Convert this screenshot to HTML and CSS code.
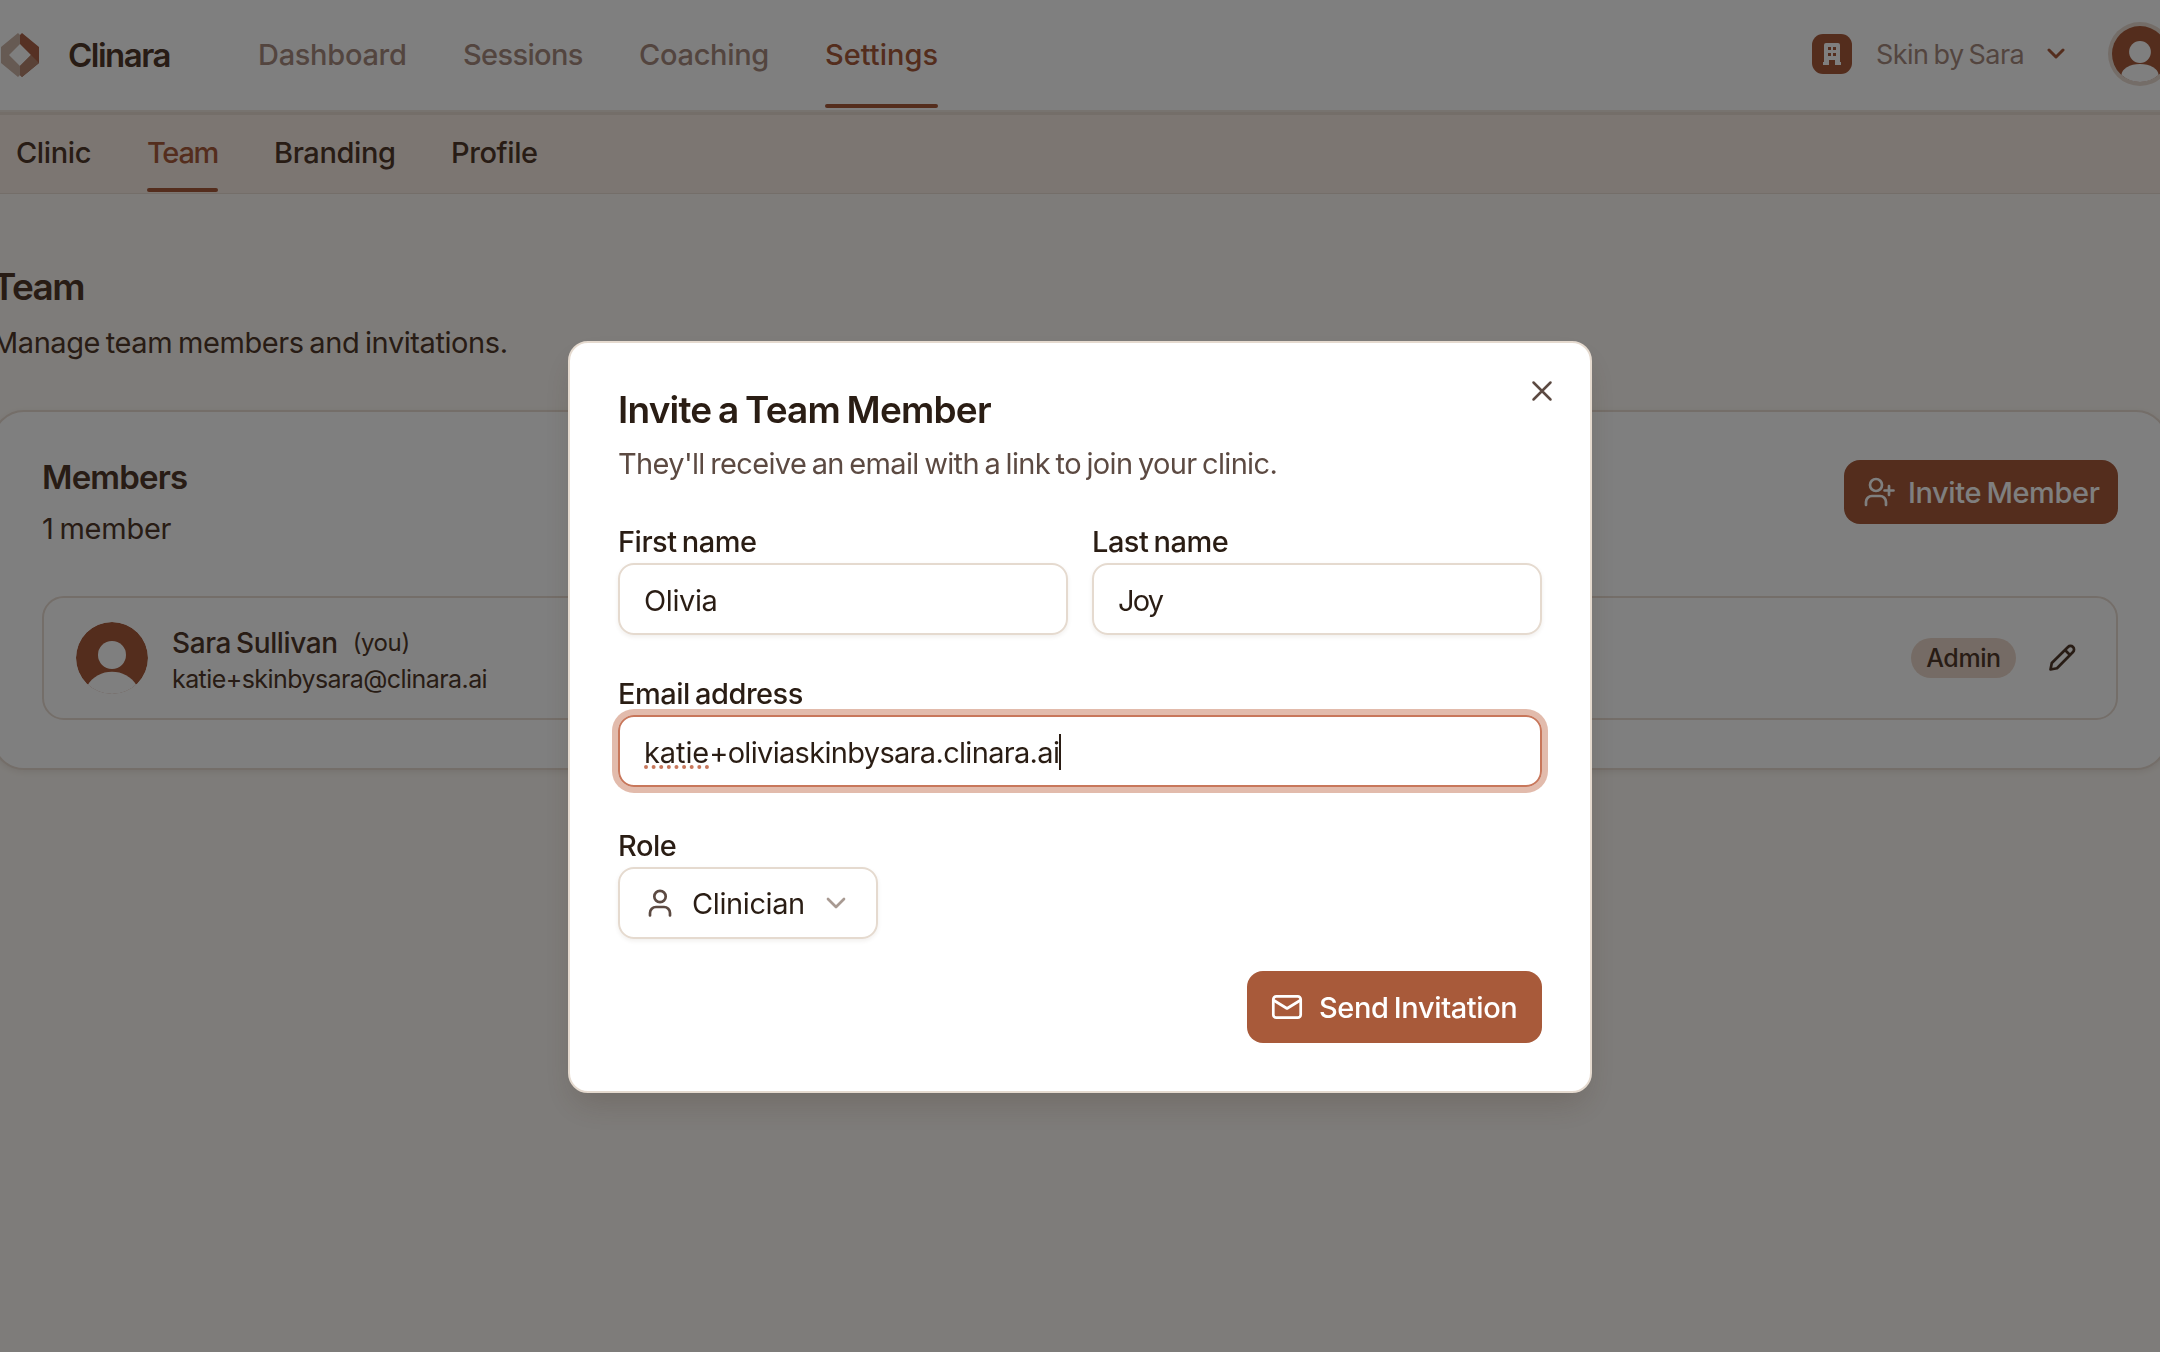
FILE: index.html
```html
<!DOCTYPE html>
<html lang="en">
<head>
    <meta charset="UTF-8">
    <meta name="viewport" content="width=device-width, initial-scale=1.0">
    <title>Team - Clinara</title>
    <link rel="stylesheet" href="styles.css">
</head>
<body>
    <header class="topbar">
        <svg class="logo" viewBox="0 0 38 44">
            <path fill="#cdb4a6" d="M17 0 0 14v16l17 14 2-2V33L8 22l11-11V2z"/>
            <path fill="#ac6348" d="M21 0 38 14v16L21 44l-2-2v-9l11-11-11-11V2z"/>
            <path fill="#b4846f" d="M19 33l11-11 8 8-17 14-2-2z"/>
        </svg>
        <span class="brand">Clinara</span>
        <nav class="main-nav">
            <a class="nav-dashboard">Dashboard</a>
            <a class="nav-sessions">Sessions</a>
            <a class="nav-coaching">Coaching</a>
            <a class="nav-settings active">Settings</a>
        </nav>
        <div class="account">
            <span class="clinic-icon">
                <svg width="20" height="24" viewBox="0 0 20 24">
                    <path fill="#fff" fill-rule="evenodd" d="M4 1h12a2 2 0 0 1 2 2v17h1v3h-6v-5H7v5H1v-3h1V3a2 2 0 0 1 2-2zM6 5v3h3V5zM11 5v3h3V5zM6 11v3h3v-3zM11 11v3h3v-3z"/>
                </svg>
            </span>
            <span class="clinic-name">Skin by Sara</span>
            <svg class="account-chevron" width="18" height="12" viewBox="0 0 18 12"><path d="M2 2l7 7 7-7"/></svg>
            <svg class="account-avatar" width="64" height="64" viewBox="0 0 64 64">
                <circle cx="32" cy="32" r="32" fill="#e9dbd1"/>
                <circle cx="32" cy="32" r="28" fill="#a85a3a"/>
                <circle cx="32" cy="30" r="10.9" fill="#fff"/>
                <path fill="#fff" d="M13.500 53a18.500 11 0 0 1 37 0A28 28 0 0 1 13.500 53z"/>
            </svg>
        </div>
    </header>

    <nav class="sub-nav">
        <a class="sub-clinic">Clinic</a>
        <a class="sub-team active">Team</a>
        <a class="sub-branding">Branding</a>
        <a>Profile</a>
    </nav>

    <main class="page">
        <h1 class="page-title">Team</h1>
        <p class="page-subtitle">Manage team members and invitations.</p>

        <section class="card">
            <div class="card-header">
                <div>
                    <h2>Members</h2>
                    <p class="count">1 member</p>
                </div>
                <button class="btn btn-invite">
                    <svg width="32" height="30" viewBox="0 0 32 30"><circle cx="12" cy="8" r="6"/><path d="M2 28v-3a6 6 0 0 1 6-6h8a6 6 0 0 1 6 6v3M25 9v9M20.500 13.500h9"/></svg>
                    <span>Invite Member</span>
                </button>
            </div>
            <div class="member">
                <svg class="member-avatar" width="72" height="72" viewBox="0 0 72 72">
                    <circle cx="36" cy="36" r="36" fill="#a85a3a"/>
                    <circle cx="36" cy="33" r="14" fill="#fff"/>
                    <path fill="#fff" d="M11 64C17 54 26 49.700 36 49.700S55 54 61 64v8H11z"/>
                </svg>
                <div class="member-info">
                    <div class="member-name"><span>Sara Sullivan</span> <small>(you)</small></div>
                    <div class="member-email">katie+skinbysara@clinara.ai</div>
                </div>
                <span class="badge">Admin</span>
                <span class="edit">
                    <svg width="28" height="28" viewBox="0 0 28 28"><path d="M2.500 25.500l1.300-6.500L20 3a3.400 3.400 0 0 1 5 5L9 24.200zM17 6l5 5"/></svg>
                </span>
            </div>
        </section>
    </main>

    <div class="overlay">
        <div class="modal">
            <button class="close">
                <svg width="22" height="22" viewBox="0 0 22 22"><path d="M2.500 2.500l17 17M19.500 2.500l-17 17"/></svg>
            </button>
            <h2 class="modal-title">Invite a Team Member</h2>
            <p class="modal-subtitle">They'll receive an email with a link to join your clinic.</p>

            <div class="field-row">
                <div class="field">
                    <label>First name</label>
                    <div class="input">Olivia</div>
                </div>
                <div class="field">
                    <label>Last name</label>
                    <div class="input last-name">Joy</div>
                </div>
            </div>
            <div class="field">
                <label>Email address</label>
                <div class="input focused"><span class="email"><span class="misspelled">katie</span>+oliviaskinbysara.clinara.ai</span><span class="caret"></span></div>
            </div>
            <div class="field">
                <label>Role</label>
                <div class="input select">
                    <svg class="icon-user" width="24" height="28" viewBox="0 0 24 28"><circle cx="12" cy="7.500" r="5.700"/><path d="M2 26.500v-2.500a6 6 0 0 1 6-6h8a6 6 0 0 1 6 6v2.500"/></svg>
                    <span class="role">Clinician</span>
                    <svg class="icon-chevron" width="20" height="12" viewBox="0 0 20 12"><path d="M2 2l8 8 8-8"/></svg>
                </div>
            </div>
            <div class="modal-actions">
                <button class="btn btn-send">
                    <svg width="32" height="26" viewBox="0 0 32 26"><rect x="2.300" y="2.300" width="27.400" height="21.400" rx="3"/><path d="M3 6.500l13 8 13-8"/></svg>
                    <span>Send Invitation</span>
                </button>
            </div>
        </div>
    </div>
</body>
</html>
```
FILE: styles.css
```css
* {
    box-sizing: border-box;
}
body {
    margin: 0;
    height: 1352px;
    overflow: hidden;
    background: #fdf9f4;
    color: #50392a;
    font-family: Inter, "Open Sans", sans-serif;
    font-size: 29px;
    letter-spacing: -0.4px;
    word-spacing: -2px;
}
h1, h2, p {
    margin: 0;
}
svg {
    display: block;
    flex: none;
}
button {
    border: 0;
    padding: 0;
    font: inherit;
    letter-spacing: inherit;
    word-spacing: inherit;
}
.topbar {
    display: flex;
    align-items: center;
    height: 112px;
    padding-left: 1px;
    background: #fff;
    border-bottom: 2px solid #efe6df;
}
.logo {
    width: 38px;
    height: 44px;
}
.brand {
    margin-left: 29px;
    width: 190px;
    font-size: 33px;
    font-weight: 600;
    letter-spacing: -1.5px;
}
.main-nav, .sub-nav {
    display: flex;
    gap: 56px;
}
.main-nav {
    color: #a78b7e;
    height: 110px;
    line-height: 110px;
}
.main-nav a, .sub-nav a {
    position: relative;
    font-weight: 450;
}
.nav-dashboard {
    width: 149px;
    letter-spacing: -0.3px;
}
.nav-sessions {
    width: 120px;
    letter-spacing: -0.65px;
}
.nav-coaching {
    width: 130px;
    letter-spacing: -0.3px;
}
.main-nav .nav-settings {
    width: 113px;
    font-weight: 500;
    letter-spacing: 0;
}
.main-nav .active, .sub-nav .active {
    color: #a85a3a;
}
.main-nav .active::after, .sub-nav .active::after {
    content: "";
    position: absolute;
    left: 0;
    right: 0;
    bottom: 2px;
    height: 4px;
    border-radius: 2px;
    background: #a85a3a;
}
.account {
    display: flex;
    align-items: center;
    flex: none;
    margin-left: auto;
    margin-right: -12px;
    padding-bottom: 2px;
    color: #a78b7e;
    font-size: 27px;
}
.clinic-icon {
    display: flex;
    align-items: center;
    justify-content: center;
    width: 40px;
    height: 40px;
    margin-right: 24px;
    border-radius: 11px;
    background: #a85a3a;
}
.clinic-name {
    width: 171px;
    letter-spacing: -0.55px;
    white-space: nowrap;
}
.account-chevron {
    fill: none;
    stroke: #a85a3a;
    stroke-width: 3;
    stroke-linecap: round;
    stroke-linejoin: round;
}
.account-avatar {
    margin-left: 43px;
}
.sub-nav {
    height: 82px;
    padding-left: 16px;
    line-height: 75px;
    background: #f8ece4;
    border-top: 3px solid #e8dcd3;
    border-bottom: 1px solid #e9dcd2;
}
.sub-clinic {
    width: 75px;
}
.sub-nav .sub-team {
    width: 71px;
    letter-spacing: -1.3px;
}
.sub-branding {
    width: 121px;
}
.sub-nav .active::after {
    bottom: 1px;
}
.page {
    margin: 0 -8px;
    padding-top: 69px;
}
.page-title {
    font-size: 37px;
    font-weight: 600;
    line-height: 48px;
    letter-spacing: -1.6px;
}
.page-subtitle {
    margin: 12px 0 47px;
    line-height: 40px;
    letter-spacing: -0.42px;
}
.card {
    padding: 48px;
    background: #fff;
    border: 2px solid #e9dcd2;
    border-radius: 32px;
    box-shadow: 0 2px 6px rgba(80, 50, 30, 0.1);
}
.card-header {
    display: flex;
    justify-content: space-between;
    align-items: flex-start;
}
.card-header h2 {
    font-size: 33px;
    font-weight: 600;
    line-height: 34px;
    letter-spacing: -0.8px;
}
.count {
    margin-top: 18px;
    line-height: 34px;
    letter-spacing: -0.25px;
}
.btn {
    display: flex;
    align-items: center;
    border-radius: 16px;
    background: #a85a3a;
    color: #fff;
    font-weight: 450;
    white-space: nowrap;
}
.btn svg {
    fill: none;
    stroke: #fff;
    stroke-width: 2.7;
    stroke-linecap: round;
    stroke-linejoin: round;
}
.btn-invite {
    width: 274px;
    height: 64px;
    padding-left: 20px;
    gap: 12px;
}
.member {
    display: flex;
    align-items: center;
    height: 124px;
    margin-top: 50px;
    padding: 0 32px;
    border: 2px solid #e9dcd2;
    border-radius: 22px;
}
.member-avatar {
    border-radius: 50%;
}
.member-info {
    flex: 1;
    margin-left: 24px;
    padding-top: 6px;
    line-height: 36px;
}
.member-name {
    display: flex;
    gap: 15px;
    font-size: 28px;
    font-weight: 500;
}
.member-name small {
    font-size: 24px;
    font-weight: 400;
}
.member-email {
    font-size: 25px;
    letter-spacing: -0.57px;
}
.badge {
    width: 105px;
    height: 40px;
    margin-right: 24px;
    border-radius: 20px;
    background: #ebd7ca;
    font-size: 25px;
    font-weight: 450;
    line-height: 41px;
    letter-spacing: -0.4px;
    text-align: center;
}
.edit {
    display: flex;
    justify-content: center;
    width: 44px;
}
.edit svg {
    fill: none;
    stroke: #50392a;
    stroke-width: 2.7;
    stroke-linejoin: round;
}

/* Invite dialog */
.overlay {
    position: fixed;
    inset: 0;
    display: flex;
    justify-content: center;
    align-items: flex-start;
    padding-top: 341px;
    background: rgba(0, 0, 0, 0.5);
}
.modal {
    position: relative;
    width: 1024px;
    height: 752px;
    padding: 48px;
    background: #fff;
    border: 2px solid #e5dacf;
    border-radius: 20px;
    box-shadow: 0 16px 32px -6px rgba(60, 40, 25, 0.2);
    color: #2a1d14;
}
.close {
    position: absolute;
    top: 37px;
    right: 37px;
    background: none;
}
.close svg {
    fill: none;
    stroke: #5c4a42;
    stroke-width: 2.5;
    stroke-linecap: round;
}
.modal-title {
    font-size: 37px;
    font-weight: 600;
    line-height: 37px;
    letter-spacing: -0.8px;
}
.modal-subtitle {
    margin-top: 16px;
    margin-bottom: -1px;
    color: #5c4a42;
    line-height: 40px;
    letter-spacing: -0.65px;
}
.field-row {
    display: flex;
    gap: 24px;
}
.field {
    flex: 1;
    margin-top: 41px;
}
.field label {
    display: block;
    margin-bottom: 3px;
    font-weight: 450;
    line-height: 36px;
    letter-spacing: -0.5px;
}
.input {
    display: flex;
    align-items: center;
    height: 72px;
    padding: 2px 24px 0;
    border: 2px solid #e5dacf;
    border-radius: 16px;
    box-shadow: 0 2px 4px rgba(80, 50, 30, 0.08);
}
.input.focused {
    border-color: #c8775b;
    box-shadow: 0 0 0 6px #e2bbac;
}
.last-name {
    letter-spacing: -1.8px;
}
.email {
    letter-spacing: -0.68px;
}
.misspelled {
    letter-spacing: -0.1px;
    text-decoration: underline dotted #c8775b 4px;
    text-underline-offset: 3px;
}
.caret {
    width: 2px;
    height: 36px;
    background: #2a1d14;
}
.select {
    width: 260px;
    padding-top: 0;
}
.icon-user, .icon-chevron {
    fill: none;
    stroke: #5c4a42;
    stroke-width: 2.7;
    stroke-linecap: round;
    stroke-linejoin: round;
}
.icon-user {
    margin-left: 4px;
}
.role {
    width: 134px;
    margin-left: 20px;
    letter-spacing: -0.4px;
}
.icon-chevron {
    stroke: #a89a92;
}
.modal-actions {
    display: flex;
    justify-content: flex-end;
    margin-top: 32px;
}
.btn-send {
    width: 295px;
    height: 72px;
    padding-left: 24px;
    gap: 16px;
}
```
